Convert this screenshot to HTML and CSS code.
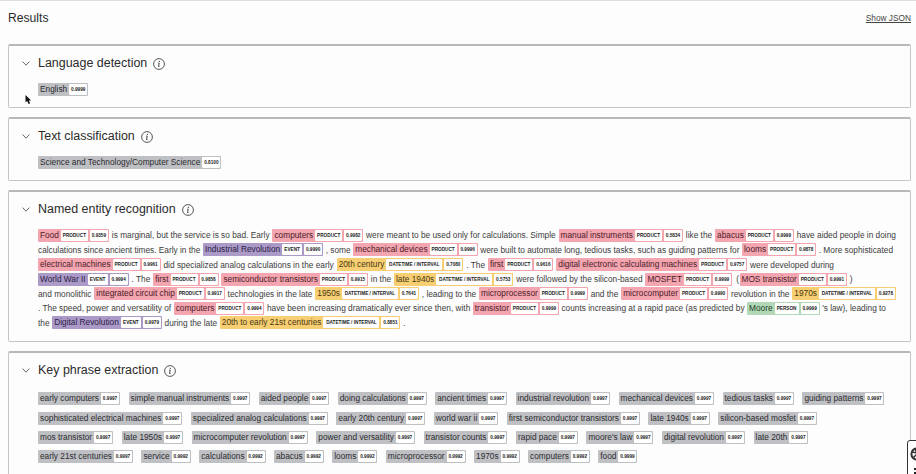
FILE: index.html
```html
<!DOCTYPE html>
<html lang="en">
<head>
<meta charset="utf-8">
<title>Results</title>
<link rel="stylesheet" href="styles.css">
</head>
<body>
<header class="top"><h1>Results</h1><a class="json" href="#">Show JSON</a></header>
<main class="panels">
<section class="panel lang"><h2>Language detection</h2><div class="body"><div class="row" data-keys="English|0.9999"></div></div></section>
<section class="panel cls"><h2>Text classification</h2><div class="body"><div class="row" data-keys="Science and Technology/Computer Science|0.8100"></div></div></section>
<section class="panel ner"><h2>Named entity recognition</h2><div class="body" id="entities"></div></section>
<section class="panel keys"><h2>Key phrase extraction</h2><div class="body" id="phrases"></div></section>
</main>
<aside class="dock"><svg width="10" height="34" viewBox="0 0 10 34"><circle cx="9" cy="13" r="5.6" fill="#fff" stroke="#333" stroke-width="2"/><path d="M4 11l5 1M5 17l4-4M7 8l2 4" stroke="#333" stroke-width="1.5"/><path d="M6 28h4M6 32h4" stroke="#222" stroke-width="2"/></svg></aside>
<svg class="cursor" width="7" height="11" viewBox="0 0 7 10"><path d="M.5.5v7.3l1.7-1.4 1.4 3 1.5-.7-1.3-2.8h2.3z" fill="#111"/></svg>
<script src="app.js"></script>
</body>
</html>
```
FILE: styles.css
```css
* { box-sizing: border-box; }
body { margin: 0; height: 474px; overflow: hidden; position: relative; background: #fdfdfd; border-top: 1px solid #dedcdc; color: #3c3c3c; font-family: "Liberation Sans", Arial, sans-serif; font-size: 8.3px; }
.top { height: 43px; padding: 10px 5px 0 8px; display: flex; justify-content: space-between; align-items: flex-start; }
h1, h2 { margin: 0; font-weight: 400; color: #2b2b2b; }
h1 { font-size: 12.15px; line-height: 15px; }
.json { color: #444; font-size: 8.3px; line-height: 14px; }
.panels { display: flex; flex-direction: column; gap: 9px; padding: 0 5px 0 8px; }
.panel { flex: none; border: 1px solid #c5c5c5; border-top: 2px solid #b8b8b8; border-radius: 2px; padding: 9px 0 0 13px; }
.lang { height: 64px; }
.cls { height: 64px; }
.ner { height: 152px; }
.keys { height: 140px; }
h2 { font-size: 12.45px; line-height: 17px; display: flex; align-items: center; }
h2 .chev { width: 8px; height: 5px; margin: 0 8px 0 0; flex: none; }
h2 .info { width: 12px; height: 12px; margin-left: 6px; flex: none; }
.body { padding: 10px 0 0 16px; }
.lang .body, .cls .body { padding-top: 11px; }
.line { height: 14.62px; display: flex; align-items: center; justify-content: space-between; white-space: pre; }
.open { margin: 0 -2.5px 0 1.5px; }
.tag { display: flex; align-items: stretch; height: 13px; flex: none; padding: 1px; border-radius: 1px; background: var(--c); color: var(--t); white-space: pre; }
.tag .name { padding: 0 2px 0 1px; line-height: 11px; }
.chip { background: #fff; color: #222; font-weight: 700; font-size: 4.7px; line-height: 11px; text-align: center; border-radius: 1px; }
.chip + .chip { margin-left: 2px; }
.score { width: 18px; }
.PRODUCT { --c: #f3a5b0; --t: #4c2028; }
.EVENT { --c: #ab9ac8; --t: #2c2145; }
.DATETIME { --c: #f7cf72; --t: #493712; }
.PERSON { --c: #b3d8b7; --t: #233f29; }
.PRODUCT .kind { width: 27px; }
.EVENT .kind { width: 20px; }
.DATETIME .kind { width: 56px; }
.PERSON .kind { width: 24px; }
.key { --c: #bfc0c4; --t: #2b2b2e; }
.row { display: flex; height: 13px; }
.keys .row { height: 19.4px; align-items: center; justify-content: space-between; }
.dock { position: absolute; left: 907px; top: 439px; width: 20px; height: 40px; border: 1.5px solid #333; border-radius: 3px; background: #fff; overflow: hidden; }
.cursor { position: absolute; left: 25px; top: 93px; }
```
FILE: app.js
```js
// Each line: rendered width in px, then plain strings or [text, type, score] entities.
const P = 'PRODUCT', E = 'EVENT', D = 'DATETIME', H = 'PERSON';
const lines = [
 [858, ['Food',P,'0.9359'], 'is marginal, but the service is so bad. Early', ['computers',P,'0.9982'], 'were meant to be used only for calculations. Simple', ['manual instruments',P,'0.5834'], 'like the', ['abacus',P,'0.9999'], 'have aided people in doing'],
 [855, 'calculations since ancient times. Early in the', ['Industrial Revolution',E,'0.9990'], ', some', ['mechanical devices',P,'0.9996'], 'were built to automate long, tedious tasks, such as guiding patterns for', ['looms',P,'0.9878'], '. More sophisticated'],
 [796, ['electrical machines',P,'0.9961'], 'did specialized analog calculations in the early', ['20th century',D,'0.7080'], '. The', ['first',P,'0.9616'], ['digital electronic calculating machines',P,'0.9757'], 'were developed during'],
 [814.5, ['World War II',E,'0.9994'], '. The', ['first',P,'0.9858'], ['semiconductor transistors',P,'0.9915'], 'in the', ['late 1940s',D,'0.5753'], 'were followed by the silicon-based', ['MOSFET',P,'0.9999'], '(', ['MOS transistor',P,'0.9991'], ')'],
 [858, 'and monolithic', ['integrated circuit chip',P,'0.9917'], 'technologies in the late', ['1950s',D,'0.7641'], ', leading to the', ['microprocessor',P,'0.9999'], 'and the', ['microcomputer',P,'0.9990'], 'revolution in the', ['1970s',D,'0.9278']],
 [848, '. The speed, power and versatility of', ['computers',P,'0.9994'], 'have been increasing dramatically ever since then, with', ['transistor',P,'0.9999'], 'counts increasing at a rapid pace (as predicted by', ['Moore',H,'0.9999'], "'s law), leading to"],
 [367.5, 'the', ['Digital Revolution',E,'0.9979'], 'during the late', ['20th to early 21st centuries',D,'0.8851'], '.']
];
const phrases = [
 [846.5, 'early computers|simple manual instruments|aided people|doing calculations|ancient times|industrial revolution|mechanical devices|tedious tasks|guiding patterns'],
 [779, 'sophisticated electrical machines|specialized analog calculations|early 20th century|world war ii|first semiconductor transistors|late 1940s|silicon-based mosfet'],
 [770.5, 'mos transistor|late 1950s|microcomputer revolution|power and versatility|transistor counts|rapid pace|moore\'s law|digital revolution|late 20th'],
 [599.5, 'early 21st centuries|service:0.9992|calculations:0.9992|abacus:0.9992|looms:0.9992|microprocessor:0.9992|1970s:0.9992|computers:0.9992|food:0.9999']
];
const tag = (text, type, score) => `<span class="tag ${type}"><span class="name">${text}</span>` +
  (type === 'key' ? '' : `<span class="chip kind">${type === D ? 'DATETIME / INTERVAL' : type}</span>`) +
  `<span class="chip score">${score}</span></span>`;
document.getElementById('entities').innerHTML = lines.map(([w, ...items]) =>
  `<div class="line" style="width:${w}px">${items.map(i => Array.isArray(i) ? tag(...i) : `<span${i === '(' ? ' class="open"' : ''}>${i}</span>`).join('')}</div>`).join('');
document.getElementById('phrases').innerHTML = phrases.map(([w, list]) =>
  `<div class="row" style="width:${w}px">${list.split('|').map(p => { const [t, s] = p.split(':'); return tag(t, 'key', s || '0.9997'); }).join('')}</div>`).join('');
document.querySelectorAll('[data-keys]').forEach(r => { const [t, s] = r.dataset.keys.split('|'); r.innerHTML = tag(t, 'key', s); });
document.querySelectorAll('h2').forEach(h => {
  h.innerHTML = '<svg class="chev" viewBox="0 0 8 5"><path d="M.6.6L4 4.2 7.4.6" fill="none" stroke="#555" stroke-width=".9"/></svg><span>' + h.textContent + '</span><svg class="info" viewBox="0 0 12 12"><circle cx="6" cy="6" r="5.4" fill="none" stroke="#444" stroke-width=".9"/><path d="M5.2 5.1h1L5.5 8.5h1" fill="none" stroke="#333" stroke-width=".9"/><circle cx="6.4" cy="3.3" r=".65" fill="#333"/></svg>';
});
```
